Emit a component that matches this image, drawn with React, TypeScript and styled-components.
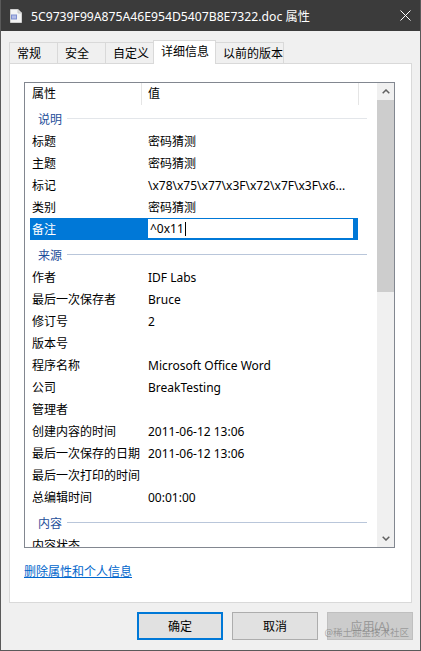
import React from 'react';
import styled, { createGlobalStyle } from 'styled-components';

const Global = createGlobalStyle`
  html, body { margin: 0; padding: 0; background: #f0f0f0; }
  body {
    font-family: "Noto Sans", "Noto Sans CJK SC", sans-serif;
    font-size: 12px;
    color: #000;
  }
  * { box-sizing: border-box; }
`;

const Window = styled.div`
  width: 421px;
  height: 651px;
  border: 1px solid #5a5a5a;
  border-top: none;
  background: #f0f0f0;
  display: flex;
  flex-direction: column;
  position: relative;
  overflow: hidden;
`;

const TitleBar = styled.div`
  height: 31px;
  flex: none;
  background: #3b3b3b;
  color: #fff;
  display: flex;
  align-items: center;
  padding-left: 9px;
  padding-right: 9px;
  font-size: 12.2px;
`;

const TitleText = styled.span`
  margin-left: 9px;
  flex: 1;
  white-space: nowrap;
`;

const Body = styled.div`
  flex: 1;
  display: flex;
  flex-direction: column;
  padding: 9px 8px 0 8px;
`;

const TabRow = styled.div`
  display: flex;
  align-items: flex-start;
  height: 23px;
  position: relative;
  z-index: 1;
`;

const Tab = styled.div<{ $w: number; $active?: boolean }>`
  width: ${(p) => p.$w}px;
  margin-left: -1px;
  &:first-child { margin-left: 0; }
  height: ${(p) => (p.$active ? 24 : 21)}px;
  margin-top: ${(p) => (p.$active ? 0 : 2)}px;
  line-height: 21px;
  padding-left: 7px;
  border: 1px solid #d9d9d9;
  border-bottom: none;
  background: ${(p) => (p.$active ? '#ffffff' : '#f0f0f0')};
  position: relative;
  z-index: ${(p) => (p.$active ? 2 : 1)};
  white-space: nowrap;
`;

const Panel = styled.div`
  height: 540px;
  flex: none;
  border: 1px solid #d9d9d9;
  background: #fff;
  position: relative;
  z-index: 0;
  padding: 18px 0 0 14px;
  display: flex;
  flex-direction: column;
`;

const ListBox = styled.div`
  width: 371px;
  height: 466px;
  border: 1px solid #828790;
  display: flex;
  background: #fff;
`;

const ListContent = styled.div`
  flex: 1;
  overflow: hidden;
  padding-left: 5px;
`;

const HeaderRow = styled.div`
  display: grid;
  grid-template-columns: 111px 218px;
  height: 22px;
  line-height: 22px;
`;

const HeaderCell = styled.div<{ $divider?: boolean }>`
  padding-left: ${(p) => (p.$divider ? 6 : 2)}px;
  border-left: ${(p) => (p.$divider ? '1px solid #e5e5e5' : 'none')};
  border-right: ${(p) => (p.$divider ? '1px solid #e5e5e5' : 'none')};
`;

const Group = styled.div<{ $first?: boolean }>`
  height: ${(p) => (p.$first ? 25 : 26)}px;
  display: flex;
  align-items: center;
  padding: ${(p) => (p.$first ? 2 : 3)}px 10px 0 8px;
  color: #1e4e9a;
`;

const GroupLine = styled.div<{ $light?: boolean }>`
  flex: 1;
  height: 1px;
  margin-left: 5px;
  background: ${(p) => (p.$light ? '#e3e6ea' : '#b9c6da')};
`;

const Row = styled.div<{ $selected?: boolean }>`
  display: grid;
  grid-template-columns: 111px 217px;
  width: 328px;
  height: 22px;
  line-height: 22px;
  padding-top: 1px;
  background: ${(p) => (p.$selected ? '#0078d7' : 'transparent')};
  color: ${(p) => (p.$selected ? '#fff' : '#000')};
  white-space: nowrap;
`;

const Label = styled.div`
  padding-left: 2px;
  overflow: hidden;
  line-height: 21px;
`;

const Value = styled.div`
  padding-left: 7px;
  overflow: hidden;
  line-height: 21px;
`;

const EditCell = styled.div`
  margin-top: -1px;
  padding: 0 4px 1px 6px;
  height: 22px;
`;

const EditBox = styled.div`
  height: 21px;
  border: 1px solid #0078d7;
  background: #fff;
  color: #000;
  line-height: 18px;
  padding-left: 2px;
  display: flex;
  align-items: center;
`;

const Caret = styled.span`
  display: inline-block;
  width: 1px;
  height: 14px;
  background: #000;
  margin-left: 1px;
`;

const ScrollBar = styled.div`
  width: 17px;
  flex: none;
  background: #f0f0f0;
  display: flex;
  flex-direction: column;
`;

const ScrollBtn = styled.div`
  height: 17px;
  flex: none;
  display: flex;
  align-items: center;
  justify-content: center;
`;

const Track = styled.div`
  flex: 1;
`;

const Thumb = styled.div`
  height: 192px;
  background: #cdcdcd;
`;

const Link = styled.a`
  margin-top: 16px;
  color: #0066cc;
  text-decoration: underline;
  line-height: 16px;
  align-self: flex-start;
  cursor: pointer;
`;

const ButtonRow = styled.div`
  margin-top: 9px;
  margin-right: -1px;
  display: flex;
  justify-content: flex-end;
  gap: 9px;
  position: relative;
`;

const Button = styled.div<{ $variant?: 'default' | 'normal' | 'disabled' }>`
  width: 86px;
  height: 28px;
  display: flex;
  align-items: center;
  justify-content: center;
  background: ${(p) => (p.$variant === 'disabled' ? '#cccccc' : '#e1e1e1')};
  border: ${(p) =>
    p.$variant === 'default'
      ? '2px solid #0078d7'
      : p.$variant === 'disabled'
      ? '1px solid #bfbfbf'
      : '1px solid #adadad'};
  color: ${(p) => (p.$variant === 'disabled' ? '#9a9a9a' : '#000')};
`;

const Watermark = styled.div`
  position: absolute;
  right: 4px;
  top: 13px;
  font-size: 9.5px;
  color: rgba(110, 110, 110, 0.55);
  white-space: nowrap;
  pointer-events: none;
`;

const DocIcon = () => (
  <svg width="12" height="14" viewBox="0 0 12 14">
    <path d="M0.5 0.5 H8 L11.5 4 V13.5 H0.5 Z" fill="#f4f4f4" stroke="#d0d0d0" />
    <path d="M8 0.5 V4 H11.5" fill="#dcdcdc" stroke="#c8c8c8" />
    <rect x="1" y="5.5" width="6" height="5" fill="#7f8fd0" />
    <rect x="2" y="6.5" width="4" height="3" fill="#b3bde8" />
  </svg>
);

const CloseIcon = () => (
  <svg width="11" height="11" viewBox="0 0 11 11">
    <path d="M0.5 0.5 L10.5 10.5 M10.5 0.5 L0.5 10.5" stroke="#fff" strokeWidth="1" />
  </svg>
);

const Chevron = ({ up }: { up?: boolean }) => (
  <svg width="8" height="5" viewBox="0 0 8 5">
    <path
      d={up ? 'M0.7 4.3 L4 1 L7.3 4.3' : 'M0.7 0.7 L4 4 L7.3 0.7'}
      fill="none"
      stroke="#606060"
      strokeWidth="1.5"
    />
  </svg>
);

type Item = { label: string; value?: string; edit?: boolean };

const groups: { name: string; light?: boolean; items: Item[] }[] = [
  {
    name: '说明',
    light: true,
    items: [
      { label: '标题', value: '密码猜测' },
      { label: '主题', value: '密码猜测' },
      { label: '标记', value: '\\x78\\x75\\x77\\x3F\\x72\\x7F\\x3F\\x6...' },
      { label: '类别', value: '密码猜测' },
      { label: '备注', value: '^0x11', edit: true },
    ],
  },
  {
    name: '来源',
    items: [
      { label: '作者', value: 'IDF Labs' },
      { label: '最后一次保存者', value: 'Bruce' },
      { label: '修订号', value: '2' },
      { label: '版本号' },
      { label: '程序名称', value: 'Microsoft Office Word' },
      { label: '公司', value: 'BreakTesting' },
      { label: '管理者' },
      { label: '创建内容的时间', value: '2011-06-12 13:06' },
      { label: '最后一次保存的日期', value: '2011-06-12 13:06' },
      { label: '最后一次打印的时间' },
      { label: '总编辑时间', value: '00:01:00' },
    ],
  },
  {
    name: '内容',
    items: [{ label: '内容状态' }],
  },
];

const tabs = [
  { label: '常规', w: 49 },
  { label: '安全', w: 49 },
  { label: '自定义', w: 49 },
  { label: '详细信息', w: 63, active: true },
  { label: '以前的版本', w: 69 },
];

export default function App() {
  return (
    <>
      <Global />
      <Window>
        <TitleBar>
          <DocIcon />
          <TitleText>5C9739F99A875A46E954D5407B8E7322.doc 属性</TitleText>
          <CloseIcon />
        </TitleBar>
        <Body>
          <TabRow>
            {tabs.map((t) => (
              <Tab key={t.label} $w={t.w} $active={t.active}>
                {t.label}
              </Tab>
            ))}
          </TabRow>
          <Panel>
            <ListBox>
              <ListContent>
                <HeaderRow>
                  <HeaderCell>属性</HeaderCell>
                  <HeaderCell $divider>值</HeaderCell>
                </HeaderRow>
                {groups.map((g, gi) => (
                  <React.Fragment key={g.name}>
                    <Group $first={gi === 0}>
                      {g.name}
                      <GroupLine $light={g.light} />
                    </Group>
                    {g.items.map((it) => (
                      <Row key={it.label} $selected={it.edit}>
                        <Label>{it.label}</Label>
                        {it.edit ? (
                          <EditCell>
                            <EditBox>
                              {it.value}
                              <Caret />
                            </EditBox>
                          </EditCell>
                        ) : (
                          <Value>{it.value}</Value>
                        )}
                      </Row>
                    ))}
                  </React.Fragment>
                ))}
              </ListContent>
              <ScrollBar>
                <ScrollBtn>
                  <Chevron up />
                </ScrollBtn>
                <Track>
                  <Thumb />
                </Track>
                <ScrollBtn>
                  <Chevron />
                </ScrollBtn>
              </ScrollBar>
            </ListBox>
            <Link>删除属性和个人信息</Link>
          </Panel>
          <ButtonRow>
            <Button $variant="default">确定</Button>
            <Button $variant="normal">取消</Button>
            <Button $variant="disabled">应用(A)</Button>
            <Watermark>@稀土掘金技术社区</Watermark>
          </ButtonRow>
        </Body>
      </Window>
    </>
  );
}
